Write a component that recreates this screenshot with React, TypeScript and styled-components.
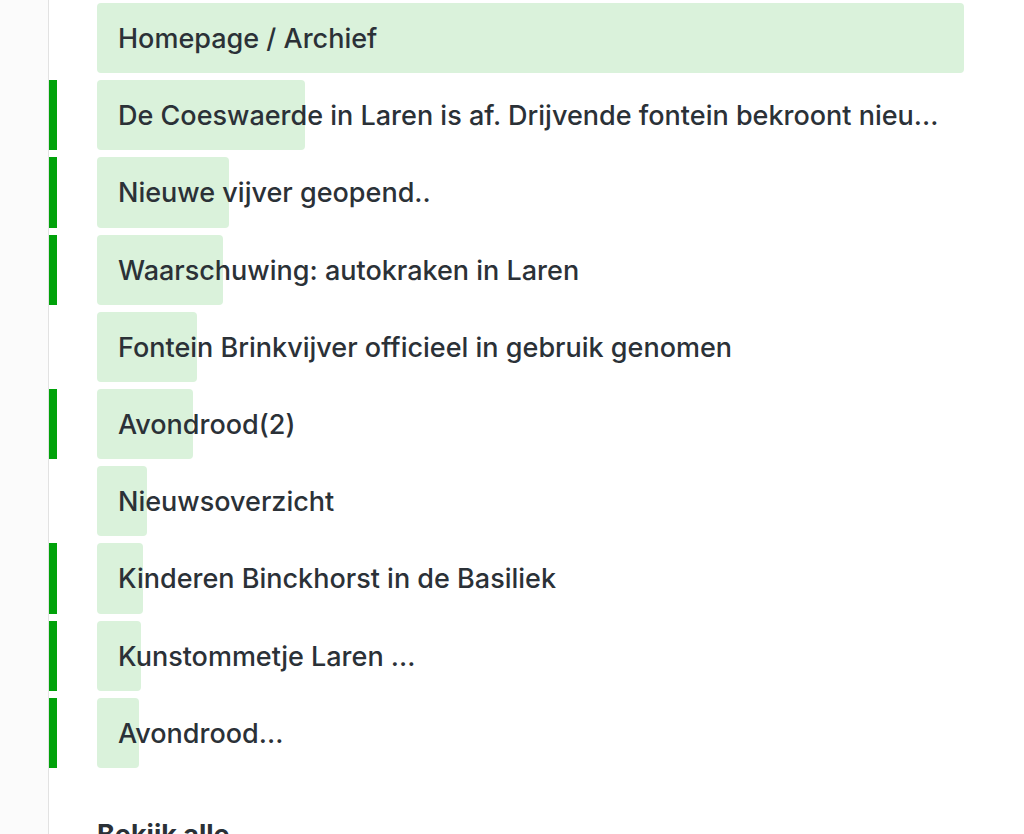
import React from "react";
import styled, { createGlobalStyle } from "styled-components";

const Global = createGlobalStyle`
  html, body { margin: 0; padding: 0; background: #ffffff; }
  body { font-family: "Inter", "Noto Sans", sans-serif; }
`;

const Page = styled.div`
  display: flex;
  width: 1024px;
  height: 834px;
  overflow: hidden;
`;

const Gutter = styled.div`
  width: 48px;
  flex: none;
  background: #fbfbfb;
  border-right: 1.5px solid #e2e2e2;
`;

const Main = styled.div`
  flex: 1;
  display: flex;
  flex-direction: column;
`;

const List = styled.div`
  display: flex;
  flex-direction: column;
  gap: 7px;
  padding-top: 3px;
`;

const Row = styled.div`
  display: flex;
  height: 70.2px;
  flex: none;
`;

const Marker = styled.div<{ $on: boolean }>`
  width: 8px;
  flex: none;
  background: ${(p) => (p.$on ? "#00a20a" : "transparent")};
`;

const Cell = styled.div`
  position: relative;
  margin-left: 40px;
  width: 867px;
  display: flex;
  align-items: center;
`;

const Fill = styled.div`
  position: absolute;
  left: 0;
  top: 0;
  bottom: 0;
  background: #daf2db;
  border-radius: 4px;
`;

const Label = styled.span`
  position: relative;
  padding-left: 21px;
  padding-top: 1px;
  font-size: 27px;
  font-weight: 500;
  color: #2b3137;
  white-space: nowrap;
  line-height: 1;
`;

const More = styled.div`
  margin-left: 48px;
  margin-top: 53px;
  font-size: 27px;
  line-height: 1;
  font-weight: 700;
  color: #2b3137;
  white-space: nowrap;
`;

const items = [
  { t: "Homepage / Archief", w: 867, on: false },
  { t: "De Coeswaerde in Laren is af. Drijvende fontein bekroont nieu...", w: 208, on: true },
  { t: "Nieuwe vijver geopend..", w: 132, on: true },
  { t: "Waarschuwing: autokraken in Laren", w: 126, on: true },
  { t: "Fontein Brinkvijver officieel in gebruik genomen", w: 100, on: false },
  { t: "Avondrood(2)", w: 96, on: true },
  { t: "Nieuwsoverzicht", w: 50, on: false },
  { t: "Kinderen Binckhorst in de Basiliek", w: 46, on: true },
  { t: "Kunstommetje Laren ...", w: 44, on: true },
  { t: "Avondrood...", w: 42, on: true },
];

export default function App() {
  return (
    <Page>
      <Global />
      <Gutter />
      <Main>
        <List>
          {items.map((it) => (
            <Row key={it.t}>
              <Marker $on={it.on} />
              <Cell>
                <Fill style={{ width: it.w }} />
                <Label>{it.t}</Label>
              </Cell>
            </Row>
          ))}
        </List>
        <More>Bekijk alle</More>
      </Main>
    </Page>
  );
}
